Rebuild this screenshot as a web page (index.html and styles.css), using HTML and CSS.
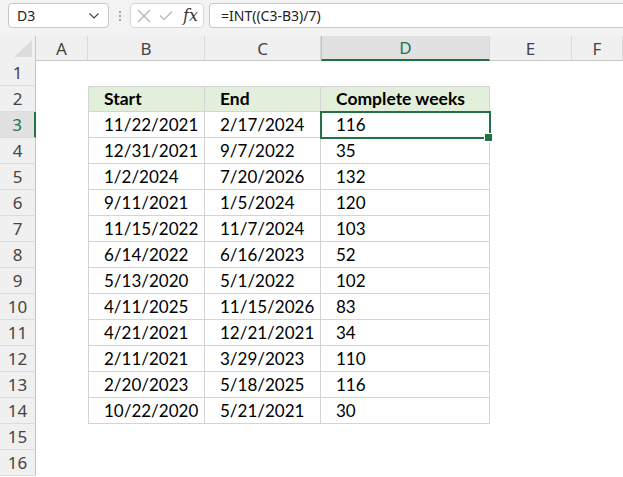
FILE: index.html
```html
<!DOCTYPE html>
<html>
<head>
<meta charset="utf-8">
<link rel="stylesheet" href="styles.css">
</head>
<body>
<div class="app">
  <div class="fbar">
    <div class="namebox">
      <span class="nb-text">D3</span>
      <svg class="chev" width="12" height="8" viewBox="0 0 12 8"><path d="M1.5 1.5 L6 6 L10.5 1.5" fill="none" stroke="#444" stroke-width="1.2"/></svg>
    </div>
    <div class="dots"><span></span><span></span><span></span></div>
    <div class="fxbox">
      <svg width="14" height="14" viewBox="0 0 14 14"><path d="M1 1 L13 13 M13 1 L1 13" stroke="#b4b4b4" stroke-width="1.2" fill="none"/></svg>
      <svg width="14" height="10" viewBox="0 0 14 10"><path d="M1 4.5 L5 8.5 L13 0.5" stroke="#b4b4b4" stroke-width="1.2" fill="none"/></svg>
      <span class="fx">fx</span>
    </div>
    <div class="finput">=INT((C3-B3)/7)</div>
  </div>

  <div class="sheet">
    <div class="row colhead">
      <div class="corner"><svg width="18" height="17" viewBox="0 0 18 17"><path d="M18 0 L18 17 L0 17 Z" fill="#dcdcdc"/></svg></div>
      <div class="ch">A</div>
      <div class="ch">B</div>
      <div class="ch">C</div>
      <div class="ch active">D</div>
      <div class="ch">E</div>
      <div class="ch">F</div>
    </div>

    <div class="row"><div class="rn">1</div></div>
    <div class="row">
      <div class="rn">2</div><div></div>
      <div class="t th first top">Start</div><div class="t th top">End</div><div class="t th top">Complete weeks</div>
    </div>
    <div class="row">
      <div class="rn active">3</div><div></div>
      <div class="t first">11/22/2021</div><div class="t">2/17/2024</div><div class="t sel">116</div>
    </div>
    <div class="row">
      <div class="rn">4</div><div></div>
      <div class="t first">12/31/2021</div><div class="t">9/7/2022</div><div class="t">35</div>
    </div>
    <div class="row">
      <div class="rn">5</div><div></div>
      <div class="t first">1/2/2024</div><div class="t">7/20/2026</div><div class="t">132</div>
    </div>
    <div class="row">
      <div class="rn">6</div><div></div>
      <div class="t first">9/11/2021</div><div class="t">1/5/2024</div><div class="t">120</div>
    </div>
    <div class="row">
      <div class="rn">7</div><div></div>
      <div class="t first">11/15/2022</div><div class="t">11/7/2024</div><div class="t">103</div>
    </div>
    <div class="row">
      <div class="rn">8</div><div></div>
      <div class="t first">6/14/2022</div><div class="t">6/16/2023</div><div class="t">52</div>
    </div>
    <div class="row">
      <div class="rn">9</div><div></div>
      <div class="t first">5/13/2020</div><div class="t">5/1/2022</div><div class="t">102</div>
    </div>
    <div class="row">
      <div class="rn">10</div><div></div>
      <div class="t first">4/11/2025</div><div class="t">11/15/2026</div><div class="t">83</div>
    </div>
    <div class="row">
      <div class="rn">11</div><div></div>
      <div class="t first">4/21/2021</div><div class="t">12/21/2021</div><div class="t">34</div>
    </div>
    <div class="row">
      <div class="rn">12</div><div></div>
      <div class="t first">2/11/2021</div><div class="t">3/29/2023</div><div class="t">110</div>
    </div>
    <div class="row">
      <div class="rn">13</div><div></div>
      <div class="t first">2/20/2023</div><div class="t">5/18/2025</div><div class="t">116</div>
    </div>
    <div class="row">
      <div class="rn">14</div><div></div>
      <div class="t first">10/22/2020</div><div class="t">5/21/2021</div><div class="t">30</div>
    </div>
    <div class="row"><div class="rn">15</div></div>
    <div class="row"><div class="rn">16</div></div>
  </div>
</div>
</body>
</html>
```

FILE: styles.css
```css
* { box-sizing: border-box; }
html, body { margin: 0; padding: 0; }
body {
  width: 623px;
  height: 477px;
  overflow: hidden;
  background: #ffffff;
  font-family: "Noto Sans", "Open Sans", sans-serif;
}
.app { width: 623px; }

.fbar {
  display: flex;
  align-items: center;
  height: 36px;
  padding: 3px 0 8px 8px;
  background: #f3f3f3;
}
.namebox {
  width: 101px;
  height: 25px;
  display: flex;
  align-items: center;
  justify-content: space-between;
  padding: 0 8px 0 8px;
  background: #fff;
  border: 1px solid #c8c8c8;
  border-radius: 4px;
  font-size: 14px;
  color: #222;
}
.dots {
  width: 21px;
  display: flex;
  flex-direction: column;
  align-items: center;
  gap: 2px;
}
.dots span {
  width: 2px;
  height: 2px;
  background: #8a8a8a;
  border-radius: 1px;
}
.fxbox {
  width: 74px;
  height: 25px;
  display: flex;
  align-items: center;
  gap: 8px;
  padding-left: 6px;
  background: #fff;
  border: 1px solid #d6d6d6;
  border-radius: 4px;
}
.fx {
  font-family: "DejaVu Serif", "Liberation Serif", serif;
  font-style: italic;
  font-size: 16px;
  color: #333;
  margin-left: 2px;
}
.finput {
  flex: 1;
  height: 25px;
  margin-left: 5px;
  display: flex;
  align-items: center;
  padding-left: 11px;
  background: #fff;
  border: 1px solid #c8c8c8;
  border-right: none;
  border-radius: 4px 0 0 4px;
  font-size: 14px;
  color: #222;
}

.sheet { background: #fff; }
.row {
  display: grid;
  grid-template-columns: 36px 52px 117px 116px 169px 82px 51px;
  height: 26px;
}
.colhead {
  height: 24px;
  background: #f0f0f0;
}
.corner {
  display: flex;
  align-items: flex-end;
  justify-content: flex-end;
  padding: 0 3px 3px 0;
  border-right: 1px solid #c6c6c6;
  border-bottom: 1px solid #c6c6c6;
}
.ch {
  display: flex;
  align-items: center;
  justify-content: center;
  font-size: 17px;
  color: #444;
  border-right: 1px solid #d8d8d8;
  border-bottom: 1px solid #c6c6c6;
}
.ch.active {
  background: #e1e1e1;
  color: #217346;
  border-bottom: 2px solid #217346;
  border-left: 1px solid #c0c0c0;
}
.rn {
  display: flex;
  align-items: center;
  justify-content: center;
  font-size: 17px;
  color: #444;
  background: #f0f0f0;
  border-right: 1px solid #c6c6c6;
  border-bottom: 1px solid #dcdcdc;
}
.rn.active {
  background: #e1e1e1;
  color: #217346;
  border-right: 2px solid #217346;
}

.t {
  font-family: Lato, "Liberation Sans", sans-serif;
  font-size: 17px;
  color: #000;
  line-height: 25px;
  padding-left: 15px;
  border-right: 1px solid #d4d4d4;
  border-bottom: 1px solid #d4d4d4;
  white-space: nowrap;
}
.t.first { border-left: 1px solid #d4d4d4; }
.t.top { border-top: 1px solid #d4d4d4; line-height: 24px; }
.th {
  background: #e2efda;
  font-weight: bold;
  font-size: 17.5px;
}
.sel { position: relative; }
.sel::after {
  content: "";
  position: absolute;
  top: -1px;
  left: -1px;
  right: -2px;
  bottom: -2px;
  border: 2px solid #217346;
}
.sel::before {
  content: "";
  position: absolute;
  right: -4px;
  bottom: -5px;
  width: 7px;
  height: 7px;
  background: #217346;
  border: 1px solid #fff;
  z-index: 2;
}
```
